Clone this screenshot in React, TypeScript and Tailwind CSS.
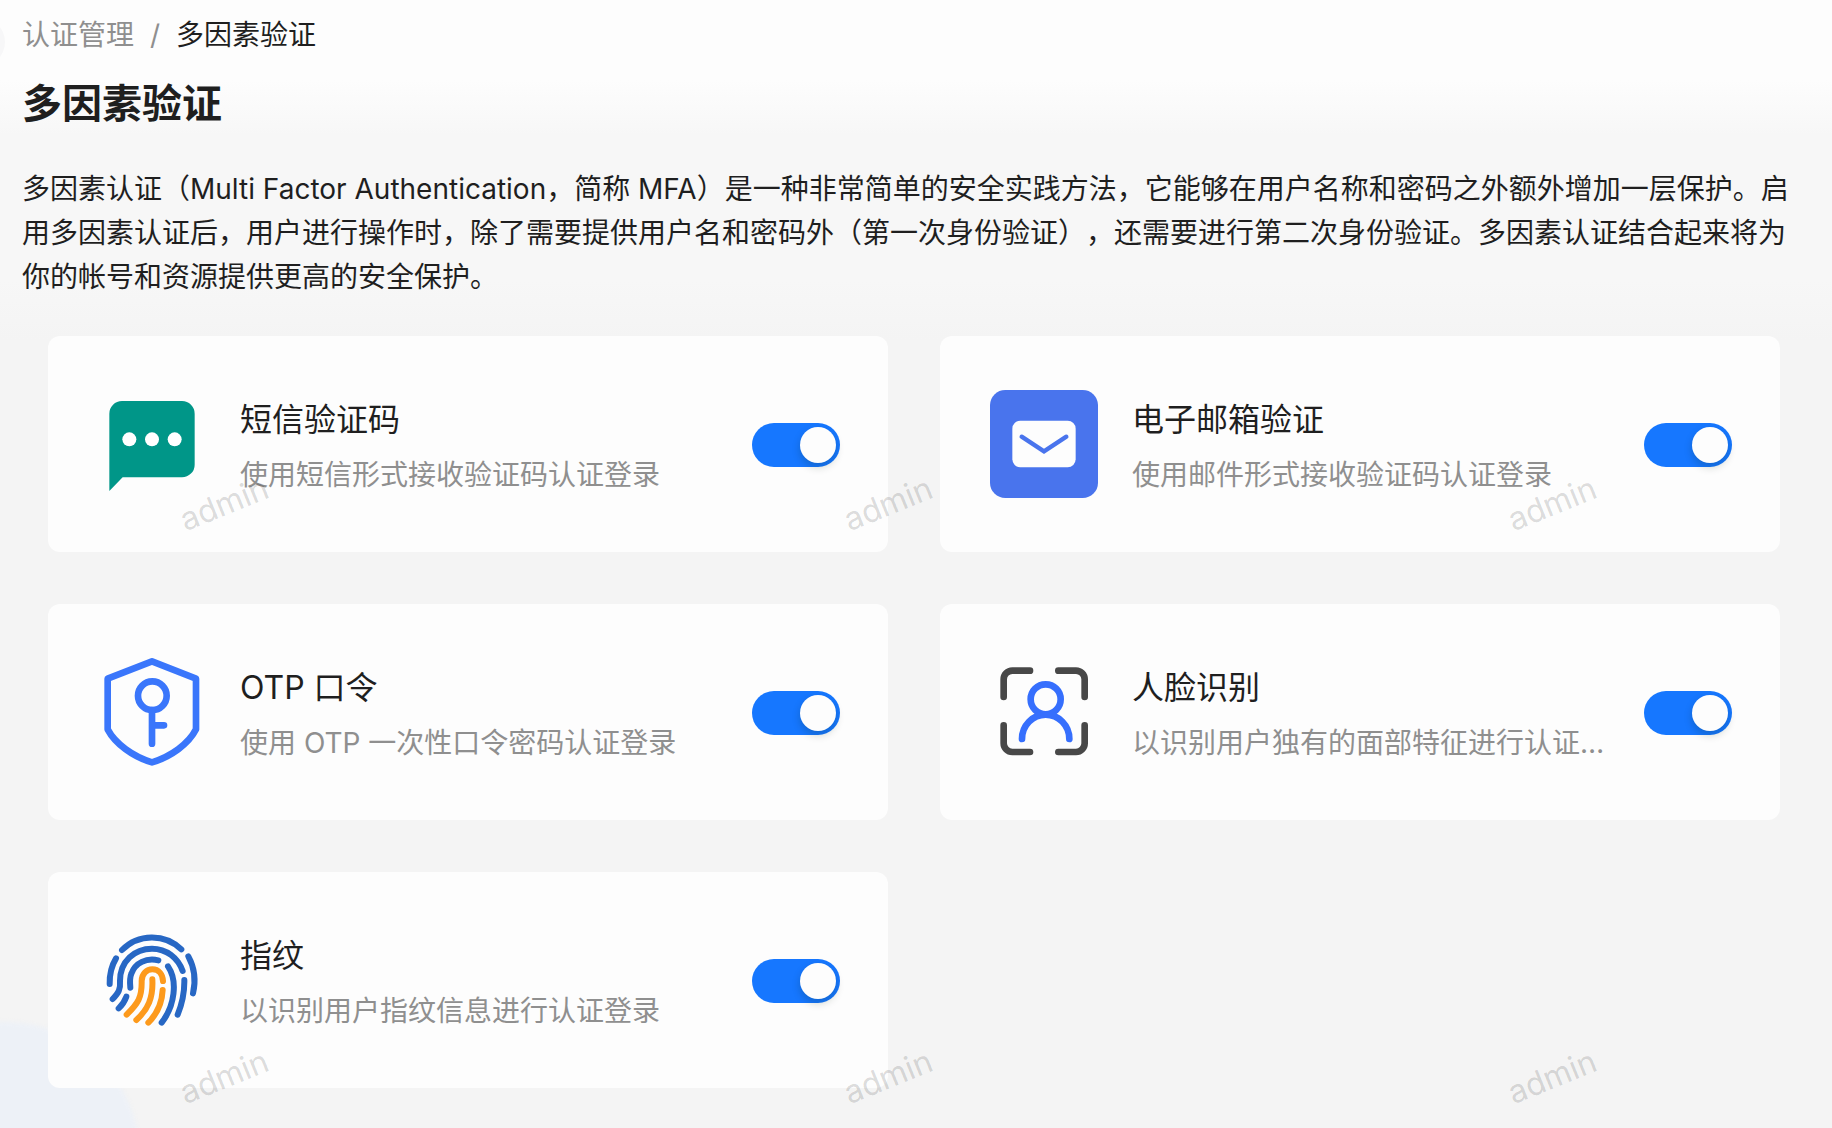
import { useState } from "react"

const SmsIcon = () => (
  <svg viewBox="0 0 324 324" className="size-full" aria-hidden="true">
    <path
      d="M72 33H252A38 38 0 0 1 290 71V224A38 38 0 0 1 252 262H74L34 303V71A38 38 0 0 1 72 33Z"
      fill="#009688"
    />
    <g fill="#fff">
      <circle cx="94" cy="148" r="21" />
      <circle cx="162" cy="148" r="21" />
      <circle cx="230" cy="148" r="21" />
    </g>
  </svg>
)

const MailIcon = () => (
  <svg viewBox="0 0 324 324" className="size-full" aria-hidden="true">
    <rect width="324" height="324" rx="46" fill="#4974ed" />
    <rect x="67" y="92" width="190" height="140" rx="24" fill="#fdfdfd" />
    <path
      d="M95 140L162 184L229 140"
      fill="none"
      stroke="#4974ed"
      strokeWidth="13"
      strokeLinecap="round"
    />
  </svg>
)

const OtpIcon = () => (
  <svg
    viewBox="0 0 324 324"
    className="size-full"
    fill="none"
    stroke="#3a76fb"
    strokeWidth="20"
    strokeLinecap="round"
    strokeLinejoin="round"
    aria-hidden="true"
  >
    <path d="M162 10L294 62V214C272 258 218 296 162 313C106 296 52 258 29 214V62Z" />
    <circle cx="163" cy="113" r="43" />
    <path d="M162 156V257M162 202H198" />
  </svg>
)

const FaceIcon = () => (
  <svg
    viewBox="0 0 324 324"
    className="size-full"
    fill="none"
    strokeWidth="20"
    strokeLinecap="round"
    aria-hidden="true"
  >
    <path
      d="M120 38H67A26 26 0 0 0 41 64V117M205 38H258A26 26 0 0 1 284 64V117M41 202V256A26 26 0 0 0 67 282H120M205 282H258A26 26 0 0 0 284 256V202"
      stroke="#484848"
    />
    <g stroke="#366ffd">
      <circle cx="167" cy="124" r="45" />
      <path d="M96 243A71 73 0 0 1 238 243" />
    </g>
  </svg>
)

const FingerprintIcon = () => (
  <svg
    viewBox="0 0 324 324"
    className="size-full"
    fill="none"
    strokeWidth="18"
    strokeLinecap="round"
    aria-hidden="true"
  >
    <g stroke="#2767c4">
      <path d="M72 72A126 126 0 0 1 250 70" />
      <path d="M54 97Q34 130 35 174" />
      <path d="M271 91Q299 142 285 202" />
      <path d="M44 219C62 200 68 190 66 165C66 105 110 68 162 68C205 68 240 95 254 135" />
      <path d="M97 185C95 165 95 155 100 143C112 110 145 95 181 103" />
      <path d="M85 212Q78 232 62 247" />
      <path d="M210 121C240 165 230 240 191 290" />
      <path d="M259 162Q260 215 239 266" />
    </g>
    <g stroke="#fd9a1c">
      <path d="M86 266C120 232 132 215 131 165C131 142 147 130 163 130C182 130 194 145 195 165" />
      <path d="M163 160C166 215 150 250 115 282" />
      <path d="M194 192C192 230 178 263 151 290" />
    </g>
  </svg>
)

const FACTORS = [
  { id: "sms", title: "短信验证码", desc: "使用短信形式接收验证码认证登录", Icon: SmsIcon },
  { id: "email", title: "电子邮箱验证", desc: "使用邮件形式接收验证码认证登录", Icon: MailIcon },
  { id: "otp", title: "OTP 口令", desc: "使用 OTP 一次性口令密码认证登录", Icon: OtpIcon },
  { id: "face", title: "人脸识别", desc: "以识别用户独有的面部特征进行认证登录", Icon: FaceIcon },
  { id: "fingerprint", title: "指纹", desc: "以识别用户指纹信息进行认证登录", Icon: FingerprintIcon },
]

// Tiled user name over the whole page
function Watermark() {
  return (
    <div
      aria-hidden="true"
      className="pointer-events-none absolute inset-0 grid auto-rows-[573px] grid-cols-[repeat(3,664px)] overflow-hidden font-['Inter',sans-serif] text-[32px] leading-10 text-black/15"
    >
      {Array.from({ length: 6 }, (_, i) => (
        <span key={i} className="ml-[178px] mt-[484px] h-10 w-fit -rotate-[22deg]">
          admin
        </span>
      ))}
    </div>
  )
}

export default function App() {
  const [enabled, setEnabled] = useState<Record<string, boolean>>({
    sms: true,
    email: true,
    otp: true,
    face: true,
    fingerprint: true,
  })

  return (
    <div
      lang="zh-CN"
      className="relative min-h-screen overflow-hidden bg-[#f4f4f4] bg-[linear-gradient(#fdfdfd_80px,#f7f7f7_135px,#f7f7f7_280px,#f4f4f4_340px)] font-['Inter','Noto_Sans_CJK_SC',sans-serif] text-[28px] leading-[44px] text-[#1f1f1f] [text-spacing-trim:space-all]"
    >
      <div className="absolute -left-[43px] top-[18px] size-12 rounded-full bg-[#f7f7f8]" />
      <div className="absolute -bottom-[164px] -left-[130px] size-[270px] rounded-full bg-[#edf1f7] blur-[2px]" />

      <main className="relative px-[22px] pt-[13px]">
        <nav aria-label="breadcrumb">
          <ol className="flex gap-4">
            <li>
              <a href="#" className="text-[#8f8f8f]">认证管理</a>
            </li>
            <li aria-hidden="true" className="text-[#8f8f8f]">/</li>
            <li aria-current="page">多因素验证</li>
          </ol>
        </nav>

        <h1 className="mt-[17px] text-[40px] font-bold leading-[60px]">多因素验证</h1>

        <p className="mt-[33px] pr-2">
          多因素认证（Multi Factor Authentication，简称 MFA）是一种非常简单的安全实践方法，它能够在用户名称和密码之外额外增加一层保护。启用多因素认证后，用户进行操作时，除了需要提供用户名和密码外（第一次身份验证），还需要进行第二次身份验证。多因素认证结合起来将为你的帐号和资源提供更高的安全保护。
        </p>

        <div className="mt-[37px] grid grid-cols-2 gap-[52px] pb-10 pl-[26px] pr-[30px]">
          {FACTORS.map(({ id, title, desc, Icon }) => (
            <section
              key={id}
              className="flex items-center rounded-xl bg-[#fdfdfd] py-[54px] pl-[50px] pr-12"
            >
              <div className="size-[108px] shrink-0">
                <Icon />
              </div>
              <div className="ml-[34px] mr-6 min-w-0 flex-1 pt-1">
                <label htmlFor={id} className="block text-[32px] leading-[48px]">
                  {title}
                </label>
                <p className="mt-[9px] truncate text-[#8f8f8f]">{desc}</p>
              </div>
              <input
                id={id}
                type="checkbox"
                role="switch"
                checked={enabled[id]}
                onChange={(e) =>
                  setEnabled((prev) => ({ ...prev, [id]: e.target.checked }))
                }
                className="mt-0.5 h-11 w-[88px] shrink-0 cursor-pointer appearance-none rounded-full bg-black/25 p-1 before:block before:size-9 before:rounded-full before:bg-[#fdfdfd] before:shadow-[0_4px_8px_rgba(0,35,11,0.2)] before:transition-transform checked:bg-[#1677ff] checked:before:translate-x-11"
              />
            </section>
          ))}
        </div>
      </main>

      <Watermark />
    </div>
  )
}
